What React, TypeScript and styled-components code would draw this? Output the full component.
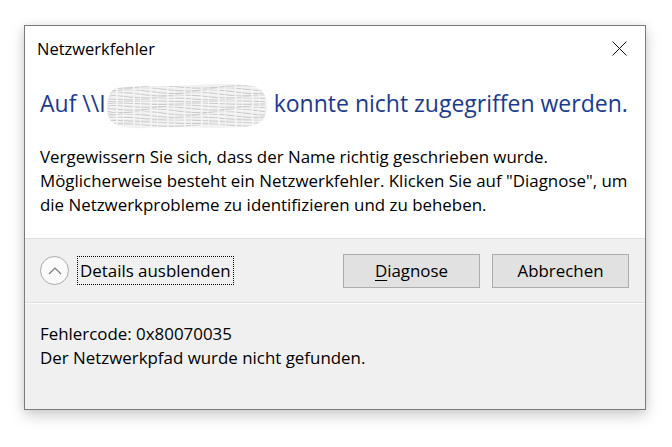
import React from "react";
import styled, { createGlobalStyle } from "styled-components";

const Global = createGlobalStyle`
  html, body { margin: 0; padding: 0; background: #ffffff; }
  body { font-family: "Open Sans", "Noto Sans", sans-serif; color: #000; }
`;

const Page = styled.div`
  width: 672px;
  height: 447px;
  padding: 25px 0 0 24px;
  box-sizing: border-box;
`;

const Window = styled.div`
  width: 622px;
  height: 385px;
  box-sizing: border-box;
  border: 1px solid #7b7b7b;
  background: #f0f0f0;
  display: flex;
  flex-direction: column;
  box-shadow: 0 6px 14px rgba(0, 0, 0, 0.18), 0 0 8px rgba(0, 0, 0, 0.08);
`;

const Main = styled.div`
  background: #ffffff;
  display: flex;
  flex-direction: column;
`;

const TitleBar = styled.div`
  height: 44px;
  display: flex;
  align-items: center;
  justify-content: space-between;
  padding: 0 18px 0 12px;
`;

const Title = styled.span`
  font-size: 16.5px;
  color: #000;
`;

const Close = styled.button`
  width: 16px;
  height: 16px;
  padding: 0;
  border: none;
  background: transparent;
  display: flex;
  align-items: center;
  justify-content: center;
`;

const Content = styled.div`
  padding: 18px 15px 21px 15px;
  display: flex;
  flex-direction: column;
  gap: 27px;
`;

const Instruction = styled.div`
  font-size: 23px;
  line-height: 30px;
  color: #1a3b8e;
  white-space: nowrap;
`;

const Smudge = styled.span`
  display: inline-block;
  width: 164px;
  height: 48px;
  margin: -12px 5px -12px -1px;
  vertical-align: middle;
`;

const Body = styled.p`
  margin: 0;
  font-size: 16.9px;
  line-height: 24px;
  color: #000;
`;

const Footer = styled.div`
  height: 65px;
  box-sizing: border-box;
  border-top: 1px solid #dfdfdf;
  border-bottom: 1px solid #dfdfdf;
  display: flex;
  align-items: center;
  padding: 0 16px 0 15px;
`;

const Toggle = styled.div`
  display: flex;
  align-items: center;
  gap: 9px;
  flex: 1;
`;

const Chevron = styled.span`
  width: 29px;
  height: 29px;
  box-sizing: border-box;
  border-radius: 50%;
  border: 1px solid #a9a9a9;
  background: #fbfbfb;
  display: flex;
  align-items: center;
  justify-content: center;
`;

const ToggleLabel = styled.span`
  font-size: 16.9px;
  line-height: 27px;
  padding: 0 2px;
  outline: 1px dotted #000;
`;

const Buttons = styled.div`
  display: flex;
  gap: 12px;
`;

const Btn = styled.button`
  width: 137px;
  height: 34px;
  box-sizing: border-box;
  border: 1px solid #adadad;
  background: #e1e1e1;
  font-family: inherit;
  font-size: 16.9px;
  color: #000;
  padding: 0;
  display: flex;
  align-items: center;
  justify-content: center;
`;

const Access = styled.span`
  text-decoration: underline;
  text-underline-offset: 3px;
`;

const Details = styled.div`
  padding: 18px 15px 0 15px;
  font-size: 16.9px;
  line-height: 24px;
  border-top: 1px solid #fbfbfb;
`;

function Blob() {
  const lines: string[] = [];
  for (let i = 0; i < 17; i++) {
    const y = 5 + i * 2.4;
    let d = `M2 ${y.toFixed(1)}`;
    for (let x = 8; x <= 164; x += 8) {
      const dy = Math.sin((x + i * 17) / 13) * 1.1 + Math.cos((x * 0.7 + i * 5) / 9) * 0.7;
      d += ` L${x} ${(y + dy).toFixed(1)}`;
    }
    lines.push(d);
  }
  return (
    <svg width="164" height="48" viewBox="0 0 164 48">
      <defs>
        <clipPath id="blobclip">
          <path d="M12 6 C30 3 60 5 90 3 C115 1 135 2 148 4 C158 7 163 16 162 26 C161 38 154 44 138 45 C110 47 70 44 40 46 C22 47 8 44 4 36 C1 28 2 18 5 12 C7 8 9 7 12 6 Z" />
        </clipPath>
      </defs>
      <g clipPath="url(#blobclip)">
        <rect x="0" y="0" width="164" height="48" fill="#f1f1f1" />
        {lines.map((d, i) => (
          <path key={i} d={d} stroke="#bdbdbd" strokeWidth="0.8" fill="none" strokeDasharray="9 2 5 1" />
        ))}
        {lines.map((d, i) => (
          <path key={"w" + i} d={d} stroke="#fafafa" strokeWidth="0.6" fill="none" transform="translate(0 1.2)" />
        ))}
      </g>
    </svg>
  );
}

export default function App() {
  return (
    <Page>
      <Global />
      <Window>
        <Main>
          <TitleBar>
            <Title>Netzwerkfehler</Title>
            <Close aria-label="Schließen">
              <svg width="15" height="15" viewBox="0 0 15 15">
                <path d="M0.5 0.5 L14.5 14.5 M14.5 0.5 L0.5 14.5" stroke="#111" strokeWidth="1" />
              </svg>
            </Close>
          </TitleBar>
          <Content>
            <Instruction>
              Auf \\I
              <Smudge>
                <Blob />
              </Smudge>
              konnte nicht zugegriffen werden.
            </Instruction>
            <Body>
              Vergewissern Sie sich, dass der Name richtig geschrieben wurde.
              <br />
              Möglicherweise besteht ein Netzwerkfehler. Klicken Sie auf "Diagnose", um
              <br />
              die Netzwerkprobleme zu identifizieren und zu beheben.
            </Body>
          </Content>
        </Main>
        <Footer>
          <Toggle>
            <Chevron>
              <svg width="14" height="8" viewBox="0 0 14 8">
                <path d="M1 7 L7 1 L13 7" stroke="#7a7a7a" strokeWidth="1.2" fill="none" />
              </svg>
            </Chevron>
            <ToggleLabel>Details ausblenden</ToggleLabel>
          </Toggle>
          <Buttons>
            <Btn>
              <Access>D</Access>iagnose
            </Btn>
            <Btn>Abbrechen</Btn>
          </Buttons>
        </Footer>
        <Details>
          Fehlercode: 0x80070035
          <br />
          Der Netzwerkpfad wurde nicht gefunden.
        </Details>
      </Window>
    </Page>
  );
}
